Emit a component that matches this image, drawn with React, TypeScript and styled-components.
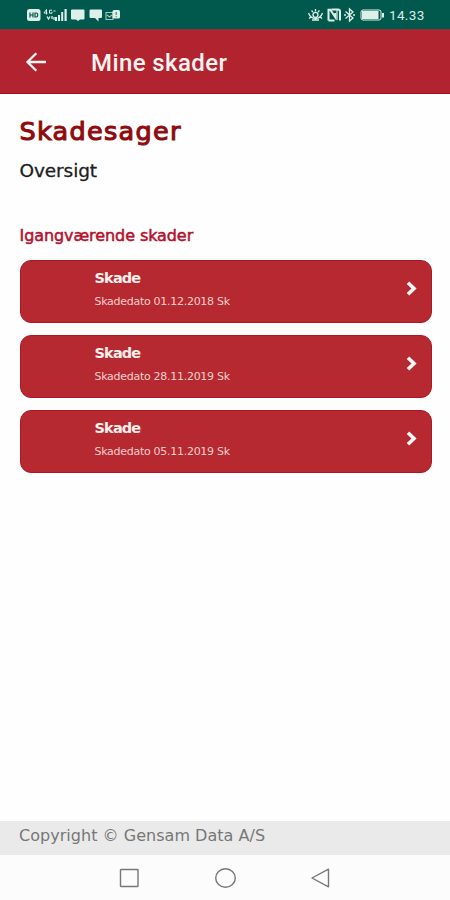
import React from "react";
import styled, { createGlobalStyle } from "styled-components";

const GlobalStyle = createGlobalStyle`
  * { box-sizing: border-box; }
  html, body { margin: 0; padding: 0; background: #fefefe; }
`;

const Screen = styled.div`
  width: 450px;
  height: 900px;
  display: flex;
  flex-direction: column;
  overflow: hidden;
  background: #fefefe;
  font-family: "DejaVu Sans", sans-serif;
`;

const StatusBar = styled.header`
  height: 29px;
  flex: none;
  display: flex;
  align-items: center;
  justify-content: space-between;
  padding: 1px 25px 0 27px;
  background: #00594c;
`;

const StatusGroup = styled.div`
  display: flex;
  align-items: center;
`;

const Clock = styled.time`
  width: 36px;
  margin-left: 3px;
  font: 400 13.5px/16px Roboto, sans-serif;
  letter-spacing: 0.35px;
  color: #d9ebe6;
  white-space: nowrap;
`;

const AppBar = styled.nav`
  height: 65px;
  flex: none;
  display: flex;
  align-items: center;
  gap: 43px;
  padding-left: 24px;
  background: #b22330;
  border-top: 1px solid #8d3038;
  border-bottom: 1px solid #a3101c;
`;

const BackButton = styled.button`
  display: flex;
  padding: 0;
  border: 0;
  background: none;
`;

const BarTitle = styled.h1`
  margin: 2px 0 0;
  font: 500 24px/30px Roboto, sans-serif;
  letter-spacing: 0.4px;
  color: #fff4f2;
`;

const Content = styled.main`
  flex: 1;
  padding: 21px 18.5px 0 19.5px;
`;

interface LineProps {
  $size: number;
  $line: number;
  $color: string;
  $spacing?: number;
  $stroke?: number;
  $bold?: boolean;
}

const Line = styled.p<LineProps>`
  margin: 0;
  font-size: ${(p) => p.$size}px;
  line-height: ${(p) => p.$line}px;
  font-weight: ${(p) => (p.$bold ? 700 : 400)};
  letter-spacing: ${(p) => p.$spacing ?? 0}px;
  color: ${(p) => p.$color};
  -webkit-text-stroke: ${(p) => p.$stroke ?? 0}px ${(p) => p.$color};
  white-space: nowrap;
`;

const Heading = styled.div`
  height: 145px;
  display: flex;
  flex-direction: column;
`;

const SectionLabel = styled.div`
  margin-top: 32px;
`;

const CardList = styled.div`
  display: flex;
  flex-direction: column;
  gap: 12px;
`;

const Card = styled.article`
  height: 63px;
  display: flex;
  justify-content: space-between;
  padding: 7px 13px 0 74px;
  border: 1px solid #ad1722;
  border-radius: 11px;
  background: #b72930;
`;

const CardText = styled.div`
  display: flex;
  flex-direction: column;
  gap: 5px;
`;

const Chevron = styled.svg`
  margin-top: 13px;
`;

const Footer = styled.footer`
  height: 34px;
  flex: none;
  padding: 5px 0 0 19px;
  background: #eaeaea;
`;

const NavBar = styled.div`
  height: 45px;
  flex: none;
  display: flex;
  align-items: center;
  gap: 75px;
  padding-left: 119px;
  background: #fcfcfc;
`;

const cards = [
  { title: "Skade", detail: "Skadedato 01.12.2018 Sk" },
  { title: "Skade", detail: "Skadedato 28.11.2019 Sk" },
  { title: "Skade", detail: "Skadedato 05.11.2019 Sk" },
];

const LeftStatus = () => (
  <svg width="94" height="16" viewBox="0 0 94 16" fill="#dcefe9">
    <rect x="0" y="2" width="13.5" height="12" rx="2.5" />
    <path d="M3 5.5v5M6 5.5v5M3 8h3M8 6v4h1.2q1.5 0 1.5-2t-1.5-2z" fill="none" stroke="#00594c" strokeWidth="1.2" />
    <path d="M19.5 2.5l-2.5 3.5h3.5M19.5 2.5v5M25 3.2h-2.5v3h2.5v-1.5M26.5 4h2" fill="none" stroke="#dcefe9" strokeWidth="1" />
    <path d="M20 9.5l1.5 2.5 1.5-2.5M25 9v3M27 10v3" fill="none" stroke="#dcefe9" strokeWidth="1.3" />
    <path d="M28 10h2v4h-2zM31 8h2v6h-2zM34.2 5h2v9h-2zM37.5 2h2.2v12h-2.2z" />
    <path d="M45 2.5h11.5q1 0 1 1v8q0 1-1 1h-3.5l-2 1.5-2-1.5h-4q-1 0-1-1v-8q0-1 1-1z" />
    <path d="M63.5 2.5h10.5q1 0 1 1v6.5q0 1-1 1h-2.5v3.500l-3.500-3.500h-4.500q-1 0-1-1v-6.500q0-1 1-1z" />
    <path d="M79 5.500h7v7h-7zM80 8l2.500 2 2.500-2" fill="none" stroke="#9bc9bf" strokeWidth="1.1" />
    <rect x="85.500" y="3" width="7.500" height="8.500" rx="1.500" />
    <path d="M89.200 5v3M89.200 9.300v1" stroke="#4a8d81" strokeWidth="1.300" />
  </svg>
);

const RightStatus = () => (
  <svg width="78" height="16" viewBox="0 0 78 16" fill="none" stroke="#dcefe9" strokeWidth="1.3">
    <path d="M0.500 6q2 5.500 7 5.500t7-5.500M1 11.500l2.500-2M14 11.500l-2.500-2M7.500 2v2.500M3.500 3.500l1.500 1.500M11.500 3.500l-1.500 1.500M4 13h7" />
    <circle cx="7.500" cy="7.800" r="2.500" />
    <path d="M20.500 13.500V2.800h1.800l5 7.500V6M23.500 2.500h6.500q2 0 2 2v9M20.500 13.500h6" strokeWidth="2" />
    <path d="M29 3v10" strokeWidth="1.200" />
    <path d="M37.500 4.500l7.500 6.500-3.500 3V2l3.500 3-7.500 6.500M36 8h2M45 8h2" />
    <rect x="53" y="3" width="20" height="10" rx="2" strokeWidth="1" />
    <rect x="54" y="4" width="16.500" height="8" fill="#dcefe9" stroke="none" />
    <path d="M75 6v4.500" strokeWidth="2" />
  </svg>
);

export default function App() {
  return (
    <>
      <GlobalStyle />
      <Screen>
        <StatusBar>
          <StatusGroup><LeftStatus /></StatusGroup>
          <StatusGroup>
            <RightStatus />
            <Clock>14.33</Clock>
          </StatusGroup>
        </StatusBar>
        <AppBar>
          <BackButton aria-label="Tilbage">
            <svg width="24" height="22" viewBox="0 0 24 22" fill="none" stroke="#fff4f2" strokeWidth="2.300">
              <path d="M22 11H3.500M12.300 2.200L3.500 11l8.800 8.800" />
            </svg>
          </BackButton>
          <BarTitle>Mine skader</BarTitle>
        </AppBar>
        <Content>
          <Heading>
            <Line $size={25.5} $line={32} $color="#8e0c10" $stroke={1.1} $spacing={1.3}>Skadesager</Line>
            <Line as="h2" $size={18.5} $line={47} $color="#1d1d1d" $stroke={0.3} $spacing={-0.1}>Oversigt</Line>
            <SectionLabel>
              <Line as="h3" $size={16} $line={20} $color="#b3102c" $stroke={0.5} $spacing={-0.08}>Igangværende skader</Line>
            </SectionLabel>
          </Heading>
          <CardList>
            {cards.map((c) => (
              <Card key={c.detail}>
                <CardText>
                  <Line $size={14.5} $line={20} $color="#fff0ee" $bold $spacing={-0.85}>{c.title}</Line>
                  <Line $size={11} $line={18} $color="#f5cfcd" $spacing={-0.28}>{c.detail}</Line>
                </CardText>
                <Chevron width="12" height="15" viewBox="0 0 12 15" fill="none" stroke="#fff8f6" strokeWidth="3.600">
                  <path d="M2 1.800l6 5.700-6 5.700" />
                </Chevron>
              </Card>
            ))}
          </CardList>
        </Content>
        <Footer>
          <Line $size={16} $line={20} $color="#777777" $spacing={0.03}>Copyright © Gensam Data A/S</Line>
        </Footer>
        <NavBar>
          <svg width="20" height="20" viewBox="0 0 20 20" fill="none" stroke="#777" strokeWidth="1.400">
            <rect x="1.500" y="1.500" width="17.500" height="17" rx="0.500" />
          </svg>
          <svg width="22" height="20" viewBox="0 0 22 20" fill="none" stroke="#777" strokeWidth="1.400">
            <ellipse cx="11.500" cy="10" rx="9.800" ry="9.300" />
          </svg>
          <svg width="20" height="20" viewBox="0 0 20 20" fill="none" stroke="#777" strokeWidth="1.400">
            <path d="M1 10L17.500 1.200v17.600z" strokeLinejoin="round" />
          </svg>
        </NavBar>
      </Screen>
    </>
  );
}
